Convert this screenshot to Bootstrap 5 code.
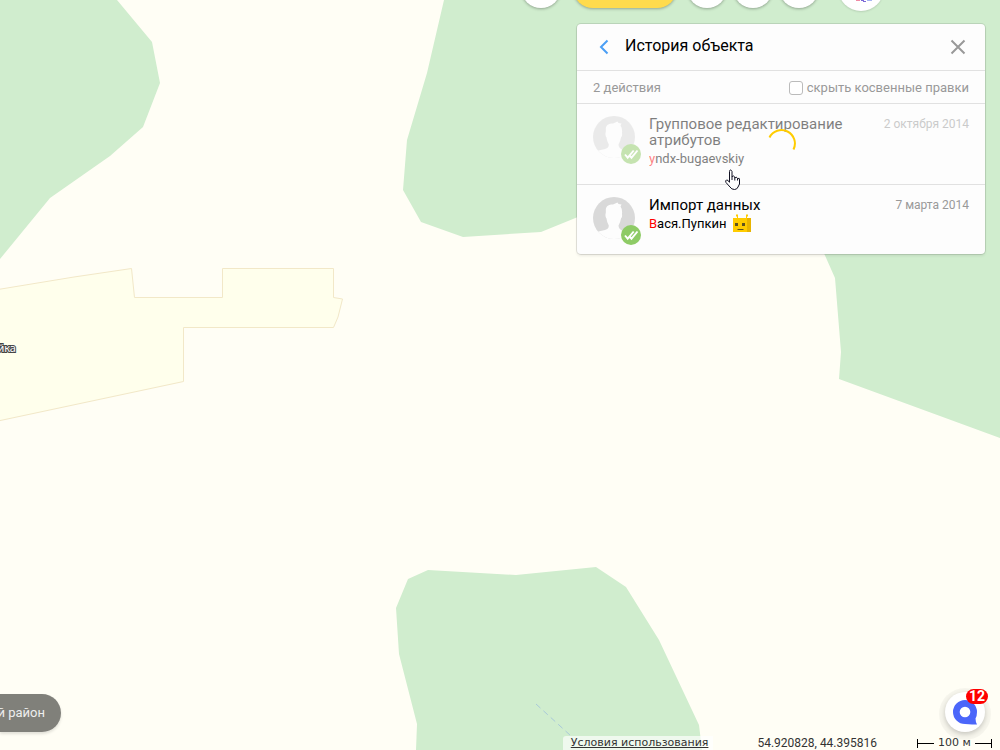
<!DOCTYPE html>
<html lang="ru">
<head>
<meta charset="utf-8">
<meta name="viewport" content="width=device-width, initial-scale=1">
<title>История объекта</title>
<link href="https://cdn.jsdelivr.net/npm/bootstrap@5.3.0/dist/css/bootstrap.min.css" rel="stylesheet">
<style>
body{font-family:Roboto,"Noto Sans",sans-serif;font-size:13px;line-height:16px;color:#000;background:#fffef5}
.map-bg{z-index:0}
.ui{z-index:1}
.tools{height:46px;margin-top:-35px;margin-right:116px}
.tool{width:40px;height:40px;border-radius:20px;border:0;background:#fff;margin-bottom:3px;box-shadow:0 1px 3px rgba(0,0,0,.3)}
.tool-main{width:104px;background:#ffdb4d}
.tool-set{gap:6px;margin:0 19px 0 10px}
.user-btn{width:46px;height:46px;border-radius:23px;border:0;background:#fff;padding:0;box-shadow:0 1px 2px rgba(0,0,0,.12)}
.panel{width:408px;margin:13px 15px 0 0;background:#fdfdfd;border-radius:4px;box-shadow:0 0 0 1px rgba(0,0,0,.1),0 2px 3px rgba(0,0,0,.08)}
.panel-head{height:47px;padding:0 16px 2px;border-bottom:1px solid #e1e1e1}
.panel-head h1{font-size:16px;line-height:20px;font-weight:400}
.icon-btn{border:0;background:none;padding:0;line-height:0}
.panel-sub{height:33px;padding:1px 16px 0;color:#999;border-bottom:1px solid #e1e1e1}
.panel-sub .form-check-input{width:14px;height:14px;margin:0;border-color:#bbb;border-radius:3px}
.act{padding:12px 16px 14px;gap:14px}
.act + .act{border-top:1px solid #e1e1e1}
.busy > .ava,.busy > .act-text,.busy > time{opacity:.5}
.ava{width:42px;height:43px}
.ok-mark{left:28px;top:28px}
.act-title{font-size:15px;line-height:16px}
.act-user{line-height:22px;color:#000}
.act-user:first-letter{color:#f00}
.act time{font-size:12px;color:#999}
.pointer{left:147px;top:145px;z-index:3}
.region{width:61px;height:38px;border-radius:0 19px 19px 0;background:#80807a;color:#eee;padding-right:16px;box-shadow:0 2px 3px rgba(0,0,0,.12)}
.chat-btn{width:40px;height:40px;margin-right:15px;background:#fff;box-shadow:0 2px 0 6px rgba(0,0,0,.035),0 2px 5px rgba(0,0,0,.2)}
.chat-count{left:21px;top:-3px;width:22px;height:15px;border-radius:8px;background:#f00;color:#fff;font-weight:700;font-size:14px;line-height:15px}
.legal{height:14px;font-size:12px;line-height:14px;color:#333}
.legal a{font-family:"DejaVu Sans",sans-serif;font-size:11px;color:#333;background:rgba(255,255,255,.65);padding:0 5px 0 8px;margin-right:44px;border-radius:3px 0 0 0}
.coords{margin-right:40px}
.scale{width:75px;height:14px;font-family:"DejaVu Sans",sans-serif;font-size:11px;margin-right:8px}
.scale i{flex:1;height:1px;background:#000}
.scale b{width:1px;height:9px;background:#000}
</style>
</head>
<body>
<main class="position-relative vh-100 overflow-hidden">
  <svg class="map-bg position-absolute top-0 start-0 w-100 h-100" viewBox="0 0 1000 750" preserveAspectRatio="xMidYMid slice" aria-hidden="true">
    <g fill="#d0edce">
      <path d="M0 0H117L152 42L160 83L143 127L110 156L50 198L0 259Z"/>
      <path d="M444 0L427 73L407 140L403 190L421 222L463 237L541 232L600 208L780 215L823 251L835 278L841 352L839 379L1000 438V0Z"/>
      <path d="M408 579L428 570L516 575L596 567L626 587L659 640L699 725L702 750H416L417 724L399 654L396 608Z"/>
    </g>
    <path d="M-2 289.500L74 277L131.500 268.500L134.500 297.500H222.500V268.500H333.500V297.500L342.500 299L338 317L333.500 327.500H183.500V381.500L-2 421Z" fill="#ffffec" stroke="#f2e8c8"/>
    <path d="M536 704L571 736" stroke="#a9c9d9" stroke-dasharray="6 4" fill="none"/>
    <text x="16" y="352" text-anchor="end" font-family="Noto Sans, sans-serif" font-size="11" fill="#fff" stroke="#444" stroke-width="2" paint-order="stroke">йка</text>
  </svg>

  <div class="ui position-relative d-flex flex-column h-100">
    <div class="tools d-flex align-items-end justify-content-end flex-shrink-0">
      <button class="tool me-2" type="button" aria-label="Поиск"></button>
      <button class="tool tool-main ms-1" type="button" aria-label="Создать"></button>
      <div class="tool-set d-flex">
        <button class="tool" type="button" aria-label="Отменить"></button>
        <button class="tool" type="button" aria-label="Слои"></button>
        <button class="tool" type="button" aria-label="Настройки"></button>
      </div>
      <button class="user-btn" type="button" aria-label="Профиль">
        <svg width="46" height="46" viewBox="0 0 46 46"><path d="M18 35.500h4" stroke="#f08aa4"/><path d="M23 35.500h3M25 36.500h3" stroke="#7d6ad8"/><path d="M29 35.500h5" stroke="#a9b6f2"/></svg>
      </button>
    </div>

    <section class="panel position-relative align-self-end" aria-label="История объекта">
      <header class="panel-head d-flex align-items-center">
        <button class="icon-btn" type="button" aria-label="Назад"><svg width="20" height="20" fill="none" stroke="#4b9ff5" stroke-width="2"><path d="M14.500 4.500L8 11l6.500 6.500"/></svg></button>
        <h1 class="mb-0 ms-2 ps-1 flex-grow-1">История объекта</h1>
        <button class="icon-btn" type="button" aria-label="Закрыть"><svg width="22" height="22" fill="none" stroke="#999" stroke-width="2"><path d="M4.500 5.500l13 13M17.500 5.500l-13 13"/></svg></button>
      </header>
      <div class="panel-sub d-flex align-items-center justify-content-between">
        <span>2 действия</span>
        <span class="d-flex align-items-center">
          <input class="form-check-input" type="checkbox" id="hideIndirect">
          <label class="ps-1" for="hideIndirect">скрыть косвенные правки</label>
        </span>
      </div>
      <article class="act busy position-relative d-flex">
        <div class="ava position-relative flex-shrink-0">
          <svg class="d-block" width="42" height="42"><defs><clipPath id="round"><circle cx="21" cy="21" r="21"/></clipPath>
            <g id="person" clip-path="url(#round)"><path fill="#d9d9d9" d="M0 0h42v42H0z"/><path fill="#fdfdfd" d="M0 42V37Q5 34 12 33Q16 32 15.800 28.500Q13.800 25 13.500 21.500Q12.200 20.500 12.500 17Q13 16 12.800 13C13 9 15.500 7.500 20 7.500L24.500 5.500L25.500 7L28.500 7.500L27.500 9.500Q29.500 12 29 17Q29.500 20.500 28 21.500Q27.500 25 25.500 28.500Q25.500 32 30 34L44 38V42Z"/></g>
            <g id="tick"><circle cx="10" cy="10" r="10" fill="#8ecb66"/><path d="M4 10.500l2.700 3.200 6-7.200M9 12l1.500 1.700 6-7.200" fill="none" stroke="#fff" stroke-width="1.900"/></g></defs><use href="#person"/></svg>
          <svg class="ok-mark position-absolute" width="20" height="20"><use href="#tick"/></svg>
        </div>
        <div class="act-text flex-grow-1">
          <div class="act-title">Групповое редактирование<br>атрибутов</div>
          <a class="act-user d-block text-decoration-none" href="#">yndx-bugaevskiy</a>
        </div>
        <time class="text-nowrap" datetime="2014-10-02">2 октября 2014</time>
        <div class="position-absolute top-0 start-0 w-100 h-100 d-flex align-items-center justify-content-center" role="status" aria-label="Загрузка">
          <svg width="30" height="30" fill="none" stroke="#fc0" stroke-width="2"><path d="M3.500 8.500A13 13 0 0 1 27.500 20.500"/></svg>
        </div>
      </article>
      <article class="act d-flex">
        <div class="ava position-relative flex-shrink-0">
          <svg class="d-block" width="42" height="42"><use href="#person"/></svg>
          <svg class="ok-mark position-absolute" width="20" height="20"><use href="#tick"/></svg>
        </div>
        <div class="act-text flex-grow-1">
          <div class="act-title">Импорт данных</div>
          <div class="d-flex">
            <a class="act-user d-block text-decoration-none" href="#">Вася.Пупкин</a>
            <svg class="ms-1" width="22" height="20"><path fill="#fc0" d="M2 5h18v14H2z"/><path fill="#e8b400" d="M16 5h4v14h-4z"/><path d="M6.500 2v3M15.500 2v3" stroke="#fc0"/><path d="M5 1.500h2v2H5zM15 1.500h2v2h-2z" fill="#fc0"/><path d="M4 10h3v3H4zM11 10h3v3h-3z" fill="#5f5220"/><path d="M6.500 16.500h6" fill="none" stroke="#5f5220"/></svg>
          </div>
        </div>
        <time class="text-nowrap" datetime="2014-03-07">7 марта 2014</time>
      </article>
      <svg class="pointer position-absolute" width="18" height="22" aria-hidden="true"><path d="M5.500 13V2.500Q5.500 1 6.500 1T8 2.500V8Q8.500 6.500 9.700 7T10.800 9Q12.500 7 13.500 9.500Q16 8.500 15.500 11V15L14 18Q13 20.500 10.500 20.500Q7.500 20.500 6 18L2 13.500Q1 11.500 2.500 11T5.500 13.500M8 8v3M10.800 9v2.500M13.500 9.500v2" fill="#fff" stroke="#112"/></svg>
    </section>

    <footer class="mt-auto">
      <div class="d-flex justify-content-between align-items-end mb-1">
        <div class="region d-flex align-items-center justify-content-end text-nowrap">й район</div>
        <button class="chat-btn rounded-circle border-0 p-0 position-relative" type="button" aria-label="Чат">
          <svg width="40" height="40"><path fill="#4b66fa" d="M20 8a12 12 0 0 1 12 12q0 4-1.500 6.500Q30.500 29.500 32 32.500H27Q24 32 20 32A12 12 0 0 1 20 8Z"/><circle cx="20" cy="20" r="5.300" fill="#fff"/></svg>
          <span class="chat-count position-absolute text-center">12</span>
        </button>
      </div>
      <div class="legal d-flex justify-content-end align-items-center">
        <a href="#">Условия использования</a>
        <span class="coords">54.920828, 44.395816</span>
        <span class="scale d-flex align-items-center"><b></b><i></i><span class="px-1">100 м</span><i></i><b></b></span>
      </div>
    </footer>
  </div>
</main>
<script src="https://cdn.jsdelivr.net/npm/bootstrap@5.3.0/dist/js/bootstrap.bundle.min.js"></script>
</body>
</html>
